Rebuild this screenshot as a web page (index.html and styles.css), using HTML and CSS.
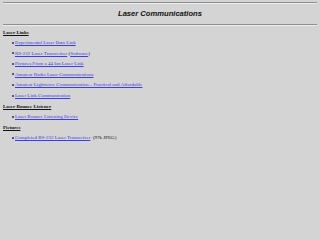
FILE: index.html
```html
<!DOCTYPE html>
<html lang="en">
<head>
  <meta charset="UTF-8">
  <meta name="viewport" content="width=device-width, initial-scale=1.0">
  <title>Laser Communications</title>
  <link rel="stylesheet" href="styles.css">
</head>
<body>
  <hr class="rule">
  <h1 class="title">Laser Communications</h1>
  <hr class="rule">

  <h2 class="section first">Laser Links</h2>
  <ul class="links">
    <li><a href="#">Experimental Laser Data Link</a></li>
    <li><a href="#">RS-232 Laser Transceiver</a> (<a href="#">Software</a>)</li>
    <li><a href="#">Pictures From a 44 km Laser Link</a></li>
    <li><a href="#">Amateur Radio Laser Communications</a></li>
    <li><a href="#">Amateur Lightwave Communication... Practical and Affordable</a></li>
    <li><a href="#">Laser Link Communication</a></li>
  </ul>

  <h2 class="section">Laser Bounce Listener</h2>
  <ul class="links">
    <li><a href="#">Laser Bounce Listening Device</a></li>
  </ul>

  <h2 class="section">Pictures</h2>
  <ul class="links">
    <li><a href="#">Completed RS-232 Laser Transceiver</a> &nbsp;(97k JPEG)</li>
  </ul>
</body>
</html>
```

FILE: styles.css
```css
body {
  font-family: "Liberation Serif", "Times New Roman", serif;
  font-size: 5px;
  background-color: #d4d4d4;
  color: #111;
  margin: 0;
  padding: 2px 3px;
}

.rule {
  border: 0;
  border-top: 1px solid #8e8e8e;
  border-bottom: 1px solid #ececec;
  margin: 0;
  height: 0;
}

.title {
  font-family: "Liberation Sans", Arial, sans-serif;
  font-style: italic;
  font-size: 7.6px;
  text-align: center;
  margin: 0;
  height: 20px;
  line-height: 20px;
}

.section {
  font-size: 5px;
  font-weight: bold;
  text-decoration: underline;
  margin: 0;
  line-height: 10.6px;
}

.section.first {
  margin-top: 1.5px;
}

.links {
  list-style: none;
  margin: 0;
  padding-left: 12px;
  line-height: 10.6px;
}

/* small round bullet drawn by hand, the default marker sits too far left */
.links li::before {
  content: "";
  display: inline-block;
  width: 2px;
  height: 2px;
  border-radius: 50%;
  background-color: #2a2a7a;
  margin-left: -3.5px;
  margin-right: 1.5px;
  vertical-align: 0.5px;
}

a {
  color: #3a3aee;
}
```
